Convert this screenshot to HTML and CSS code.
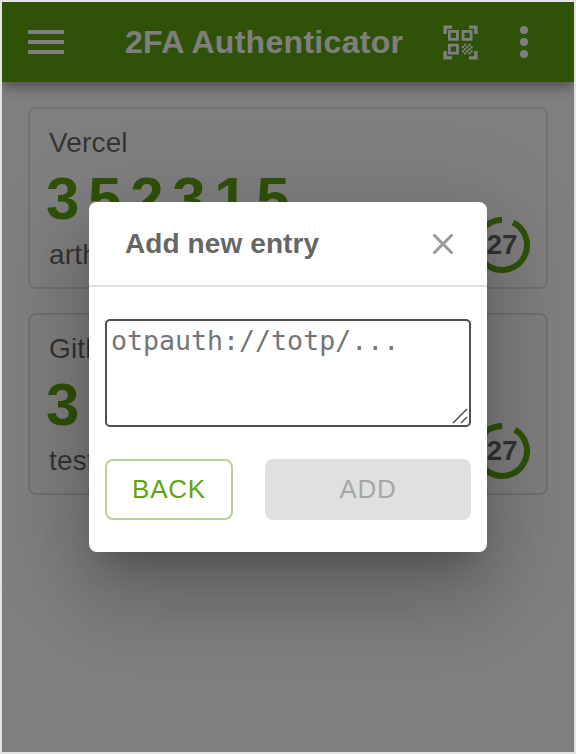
FILE: index.html
```html
<!DOCTYPE html>
<html lang="en">
<head>
<meta charset="utf-8">
<title>2FA Authenticator</title>
<link rel="stylesheet" href="styles.css">
</head>
<body>
<div class="app">
  <header class="bar">
    <svg class="icon" viewBox="0 0 24 24"><path d="M3 18h18v-2H3v2zm0-5h18v-2H3v2zm0-7v2h18V6H3z"/></svg>
    <h1>2FA Authenticator</h1>
    <svg class="icon qr" viewBox="0 0 24 24">
      <path d="M22 7h-2V4h-3V2h5v5zm0 15v-5h-2v3h-3v2h5zM2 22h5v-2H4v-3H2v5zM2 2v5h2V4h3V2H2z"/>
      <path class="qr-frames" d="M5.500 5.500h4.700v4.700H5.500zM13.500 5.500h4.700v4.700h-4.700zM5.500 13.500h4.700v4.700H5.500z"/>
      <path d="M14.100 12.800h1.250v1.250H14.100zm2.500 0h1.250v1.250H16.600zM12.850 14.050h1.250v1.250h-1.250zm2.500 0h1.250v1.250h-1.250zm2.500 0h1.250v1.250h-1.250zM14.100 15.300h1.250v1.250H14.100zm2.500 0h1.250v1.250H16.600zM12.850 16.550h1.250v1.250h-1.250zm2.500 0h1.250v1.250h-1.250zm2.500 0h1.250v1.250h-1.250zM14.100 17.800h1.250v1.250H14.100zm2.500 0h1.250v1.250H16.600z"/>
    </svg>
    <svg class="icon" viewBox="0 0 24 24"><path d="M12 8a2 2 0 1 0 0-4 2 2 0 0 0 0 4zm0 2a2 2 0 1 0 0 4 2 2 0 0 0 0-4zm0 6a2 2 0 1 0 0 4 2 2 0 0 0 0-4z"/></svg>
  </header>
  <main class="list">
    <section class="card">
      <div class="info">
        <div class="name">Vercel</div>
        <div class="code">352315</div>
        <div class="name">arth</div>
      </div>
      <div class="timer">
        <svg viewBox="0 0 56 56"><circle cx="28" cy="28" r="25" pathLength="360" stroke-dasharray="334 26" transform="rotate(-64 28 28)"/></svg>
        <span>27</span>
      </div>
    </section>
    <section class="card">
      <div class="info">
        <div class="name">Gith</div>
        <div class="code">3</div>
        <div class="name">test</div>
      </div>
      <div class="timer">
        <svg viewBox="0 0 56 56"><circle cx="28" cy="28" r="25" pathLength="360" stroke-dasharray="329 31" transform="rotate(-59 28 28)"/></svg>
        <span>27</span>
      </div>
    </section>
  </main>
  <div class="backdrop">
    <div class="dialog" role="dialog">
      <div class="dialog-head">
        <h2>Add new entry</h2>
        <svg class="close" viewBox="0 0 24 24"><path d="M19 6.410L17.590 5 12 10.590 6.410 5 5 6.410 10.590 12 5 17.590 6.410 19 12 13.410 17.590 19 19 17.590 13.410 12z"/></svg>
      </div>
      <div class="dialog-body">
        <div class="field">
          <span>otpauth://totp/...</span>
          <svg class="grip" viewBox="0 0 16 16"><path d="M1 15L15 1M9 15l6-6"/></svg>
        </div>
        <div class="actions">
          <button class="back">BACK</button>
          <button class="add" disabled>ADD</button>
        </div>
      </div>
    </div>
  </div>
</div>
</body>
</html>
```
FILE: styles.css
```css
* { box-sizing: border-box; }
body {
  margin: 0;
  padding: 2px;
  height: 754px;
  overflow: hidden;
  background: #e4e4e4;
  font-family: "Liberation Sans", Arial, sans-serif;
}
h1, h2 { margin: 0; }
.app {
  position: relative;
  width: 572px;
  height: 750px;
  overflow: hidden;
  background: #fff;
}
.bar {
  position: relative;
  display: flex;
  align-items: center;
  height: 80px;
  padding: 0 26px 0 20px;
  background: #5fa411;
  color: #fff;
  box-shadow: 0 4px 8px -2px rgba(0,0,0,.2), 0 8px 10px rgba(0,0,0,.14), 0 2px 20px rgba(0,0,0,.12);
}
.bar h1 {
  flex: 1;
  margin-left: 55px;
  font-size: 32px;
  line-height: 40px;
  letter-spacing: .3px;
  white-space: nowrap;
}
.icon { flex: none; width: 48px; height: 48px; fill: currentColor; }
.qr { width: 41px; height: 41px; margin-right: 19.500px; }
.qr-frames { fill: none; stroke: currentColor; stroke-width: 1.600; }
.list {
  display: flex;
  flex-direction: column;
  gap: 24px;
  padding: 25px 26px;
}
.card {
  display: flex;
  justify-content: space-between;
  align-items: flex-end;
  height: 182px;
  padding: 0 16px 14px 19px;
  border: 2px solid #e0e0e0;
  border-radius: 8px;
}
.info { align-self: flex-start; padding-top: 14px; }
.name {
  font-size: 28px;
  line-height: 40px;
  letter-spacing: .15px;
  color: rgba(0,0,0,.6);
}
.code {
  margin-left: -3px;
  font-size: 60px;
  font-weight: 700;
  line-height: 72px;
  letter-spacing: 8.700px;
  color: #5fa411;
}
.timer { display: grid; width: 56px; height: 56px; place-items: center; }
.timer > * { grid-area: 1 / 1; }
.timer svg { width: 56px; height: 56px; }
.timer circle { fill: none; stroke: #5fa411; stroke-width: 6; }
.timer span { font-size: 28px; font-weight: 700; line-height: 32px; color: rgba(0,0,0,.6); }
.backdrop {
  position: absolute;
  inset: 0;
  display: flex;
  align-items: center;
  justify-content: center;
  background: rgba(0,0,0,.5);
}
.dialog {
  width: 398px;
  height: 350px;
  background: #fff;
  border-radius: 8px;
  box-shadow: 0 22px 30px -14px rgba(0,0,0,.2), 0 48px 76px 6px rgba(0,0,0,.14), 0 18px 92px 16px rgba(0,0,0,.12);
}
.dialog-head {
  display: flex;
  align-items: center;
  justify-content: space-between;
  height: 85px;
  padding: 0 26px 0 36px;
  border-bottom: 2px solid #e0e0e0;
}
.dialog-head h2 { font-size: 28px; line-height: 36px; letter-spacing: .1px; color: #666; }
.close { width: 36px; height: 36px; fill: #999; }
.dialog-body { padding: 32px 16px; }
.field {
  display: flex;
  justify-content: space-between;
  height: 108px;
  padding: 4px 1px 1px 4px;
  border: 2px solid #505050;
  border-radius: 5px;
}
.field span {
  font: 26.600px/32px "DejaVu Sans Mono", monospace;
  color: #757575;
  white-space: nowrap;
}
.grip {
  align-self: flex-end;
  flex: none;
  width: 16px;
  height: 16px;
  fill: none;
  stroke: #505050;
  stroke-width: 1.500;
}
.actions { display: flex; gap: 32px; margin-top: 32px; }
.actions button {
  height: 61px;
  padding: 0 0 2px;
  border: 0;
  border-radius: 8px;
  font: 26px/44px "Liberation Sans", Arial, sans-serif;
  letter-spacing: .740px;
}
.actions .back {
  width: 128px;
  border: 2px solid #b7d294;
  background: #fff;
  color: #5fa411;
}
.actions .add { flex: 1; background: #e0e0e0; color: #a6a6a6; }
```
